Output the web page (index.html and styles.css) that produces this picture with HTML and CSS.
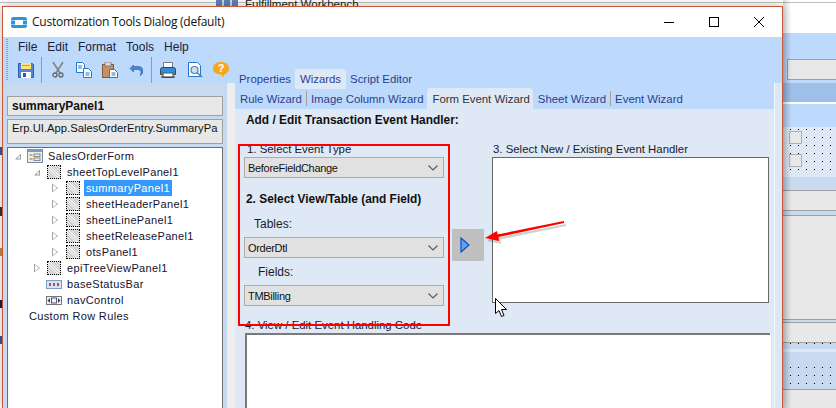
FILE: index.html
```html
<!DOCTYPE html>
<html lang="en">
<head>
<meta charset="utf-8">
<title>Customization Tools Dialog</title>
<link rel="stylesheet" href="styles.css">
</head>
<body>
<div class="desktop">
  <div class="back-window">
    <div class="back-title"><span class="back-icon"></span><span>Fulfillment Workbench</span></div>
    <div class="back-left"></div>
    <div class="back-strip">
      <div class="b-white"></div>
      <div class="b-blue"><div class="b-input"></div></div>
      <div class="b-dark"></div>
      <div class="b-gap"></div>
      <div class="b-blue2"></div>
      <div class="b-dots"><i></i><i></i></div>
      <div class="b-mid"></div>
      <div class="b-grey1"></div>
      <div class="b-line1"></div>
      <div class="b-grey2"></div>
      <div class="b-line2"></div>
      <div class="b-grey3"></div>
      <div class="b-dots2"></div>
      <div class="b-grey4"></div>
    </div>
  </div>

  <div class="window">
    <header class="titlebar">
      <svg class="app-icon" width="16" height="11" viewBox="0 0 16 11"><rect x="0" y="0" width="16" height="11" rx="2.5" fill="#2f93d6"/><rect x="0" y="3" width="16" height="1" fill="#8fcdf0"/><rect x="0" y="7" width="16" height="1" fill="#8fcdf0"/><rect x="4" y="3" width="8" height="5" fill="#fff"/></svg>
      <span class="title-text">Customization Tools Dialog (default)</span>
      <div class="controls">
        <svg width="10" height="10" viewBox="0 0 10 10"><path d="M0 5.5H10" stroke="#000" fill="none"/></svg>
        <svg width="10" height="10" viewBox="0 0 10 10"><rect x=".5" y=".5" width="9" height="9" stroke="#000" fill="none"/></svg>
        <svg width="10" height="10" viewBox="0 0 10 10"><path d="M0 0L10 10M10 0L0 10" stroke="#000" fill="none"/></svg>
      </div>
    </header>

    <div class="chrome">
      <div class="grip"></div>
      <nav class="menubar"><span>File</span><span>Edit</span><span>Format</span><span>Tools</span><span>Help</span></nav>
      <div class="toolbar">
        <svg class="t-save" width="16" height="16" viewBox="0 0 16 16"><path d="M.5 1.5h14l1 1v13H.5z" fill="#4f86d8" stroke="#2f5da8"/><rect x="3" y="1" width="10" height="6" fill="#ffe27a"/><rect x="4" y="3" width="8" height="1" fill="#d29a2c"/><rect x="3" y="10" width="10" height="6" fill="#fff"/><rect x="5" y="11" width="3" height="4" fill="#2f5da8"/></svg>
        <span class="sep s1"></span>
        <svg class="t-cut" width="12" height="16" viewBox="0 0 12 16"><path d="M1 0L8 11M11 0L4 11" stroke="#7d7d7d" stroke-width="1.5" fill="none"/><circle cx="3" cy="13" r="2" fill="none" stroke="#666" stroke-width="1.3"/><circle cx="9" cy="13" r="2" fill="none" stroke="#666" stroke-width="1.3"/></svg>
        <svg class="t-copy" width="16" height="16" viewBox="0 0 16 16"><path d="M.5.5h6l2 2v8H.5z" fill="#fff" stroke="#1e78d0"/><path d="M7.5 6.5h5l3 3v6h-8z" fill="#fff" stroke="#1e78d0"/><path d="M2 4h4M2 6h4M9.500 11h4M9.500 13h4" stroke="#1e78d0"/></svg>
        <svg class="t-paste" width="16" height="16" viewBox="0 0 16 16"><rect x=".5" y="2.500" width="11" height="13" fill="#c58f68" stroke="#8a5a38"/><rect x="3" y="0" width="6" height="4" fill="#ddd" stroke="#777" stroke-width=".8"/><path d="M7.500 7.500h5l3 3v5h-8z" fill="#fff" stroke="#1e78d0"/><path d="M9.500 11h4M9.500 13h4" stroke="#1e78d0"/></svg>
        <svg class="t-undo" width="14" height="12" viewBox="0 0 14 12"><path d="M4.500 1L1 4.500 4.500 8V5.500H9c2 0 3 1 3 3 0 1-.4 2-1 3 2-1 3-2.500 3-4.500 0-3-2-4.500-5-4.500H4.500z" fill="#4d82d6" stroke="#2d5cab" stroke-width=".6"/></svg>
        <span class="sep s2"></span>
        <svg class="t-print" width="16" height="16" viewBox="0 0 16 16"><path d="M3.500.5h9v6h-9z" fill="#fff" stroke="#777"/><path d="M.5 7.500q0-2 2-2h11q2 0 2 2v5h-15z" fill="#2e8fe0" stroke="#444"/><rect x="3" y="11" width="10" height="4.500" fill="#fff" stroke="#555"/><rect x="1" y="14.500" width="14" height="1" fill="#333"/></svg>
        <svg class="t-prev" width="15" height="16" viewBox="0 0 15 16"><path d="M.5.5h9l3 3v11H.5z" fill="#fff" stroke="#1e78d0"/><circle cx="6.500" cy="8" r="3.500" fill="#c9e2f7" stroke="#5a7d9e" stroke-width="1.200"/><path d="M9 10.500L14 15" stroke="#5a7d9e" stroke-width="1.600"/></svg>
        <svg class="t-help" width="16" height="16" viewBox="0 0 16 16"><path d="M8 0c5 0 8 2.500 8 6.500 0 3-2 5-4 5.500L9 15.500V12.500C4 12.500 0 10.500 0 6.500 0 2.500 3 0 8 0z" fill="#f5a81c"/><text x="8" y="10" class="q">?</text></svg>
      </div>

      <div class="workspace">
        <aside class="left-panel">
          <div class="panel-name">summaryPanel1</div>
          <div class="panel-class">Erp.UI.App.SalesOrderEntry.SummaryPa</div>
          <div class="tree">
            <div class="row d0"><i class="tw open"></i><svg class="node" width="16" height="14" viewBox="0 0 16 14"><rect x=".5" y=".5" width="15" height="13" fill="#f2ecd8" stroke="#6f8fb5"/><rect x=".5" y=".5" width="15" height="2.500" fill="#6f9fd8"/><rect x="7" y="5" width="6" height="2.500" fill="none" stroke="#777" stroke-width=".8"/><rect x="7" y="9" width="6" height="2.500" fill="none" stroke="#777" stroke-width=".8"/><path d="M2.500 6h3M2.500 10h3" stroke="#777"/></svg><span>SalesOrderForm</span></div>
            <div class="row d1"><i class="tw open"></i><b class="dot"></b><span>sheetTopLevelPanel1</span></div>
            <div class="row d2"><i class="tw"></i><b class="dot"></b><span class="sel">summaryPanel1</span></div>
            <div class="row d2"><i class="tw"></i><b class="dot"></b><span>sheetHeaderPanel1</span></div>
            <div class="row d2"><i class="tw"></i><b class="dot"></b><span>sheetLinePanel1</span></div>
            <div class="row d2"><i class="tw"></i><b class="dot"></b><span>sheetReleasePanel1</span></div>
            <div class="row d2"><i class="tw"></i><b class="dot"></b><span>otsPanel1</span></div>
            <div class="row d1"><i class="tw"></i><b class="dot"></b><span>epiTreeViewPanel1</span></div>
            <div class="row d1"><i class="tw none"></i><svg class="mini" width="16" height="9" viewBox="0 0 16 9"><rect x=".5" y=".5" width="15" height="8" fill="#d4e3f5" stroke="#7f9dc0"/><path d="M3 3h2v3H3zM7 3h2v3H7zM11 3h2v3h-2z" fill="#c04a4a"/></svg><span>baseStatusBar</span></div>
            <div class="row d1"><i class="tw none"></i><svg class="mini" width="16" height="9" viewBox="0 0 16 9"><rect x=".5" y=".5" width="15" height="8" fill="#f2f2f2" stroke="#777"/><path d="M4 2L1.500 4.500 4 7zM12 2l2.500 2.500L12 7z" fill="#446"/><rect x="5.500" y="2" width="5" height="5" fill="none" stroke="#557"/></svg><span>navControl</span></div>
            <div class="row custom"><span>Custom Row Rules</span></div>
          </div>
        </aside>
        <div class="divider"></div>
        <main class="right-panel">
          <div class="tabs">
            <span class="tab">Properties</span><span class="tab active">Wizards</span><span class="tab">Script Editor</span>
          </div>
          <div class="subtabs">
            <span class="sub">Rule Wizard</span><i class="bar"></i><span class="sub">Image Column Wizard</span><span class="sub active">Form Event Wizard</span><span class="sub">Sheet Wizard</span><i class="bar"></i><span class="sub">Event Wizard</span>
          </div>
          <section class="content">
            <h1 class="heading">Add / Edit Transaction Event Handler:</h1>
            <div class="columns">
              <div class="col-left">
                <label class="lab first">1. Select Event Type</label>
                <div class="combo"><span>BeforeFieldChange</span><svg width="10" height="6" viewBox="0 0 10 6"><path d="M.5.5L5 5 9.500.5" fill="none" stroke="#555" stroke-width="1.100"/></svg></div>
                <h2 class="heading two">2. Select View/Table (and Field)</h2>
                <label class="lab tables">Tables:</label>
                <div class="combo"><span>OrderDtl</span><svg width="10" height="6" viewBox="0 0 10 6"><path d="M.5.5L5 5 9.500.5" fill="none" stroke="#555" stroke-width="1.100"/></svg></div>
                <label class="lab fields">Fields:</label>
                <div class="combo"><span>TMBilling</span><svg width="10" height="6" viewBox="0 0 10 6"><path d="M.5.5L5 5 9.500.5" fill="none" stroke="#555" stroke-width="1.100"/></svg></div>
              </div>
              <div class="go"><svg width="10" height="16" viewBox="0 0 10 16"><path d="M1 1L9 8 1 15z" fill="#5ba4f0" stroke="#0c4fc0" stroke-width="1.200"/></svg></div>
              <div class="col-right">
                <label class="lab">3. Select New / Existing Event Handler</label>
                <div class="handler-list"></div>
              </div>
            </div>
            <label class="lab code-label">4. View / Edit Event Handling Code</label>
            <div class="code-box"></div>
          </section>
        </main>
        <div class="edge"></div>
      </div>
    </div>
  </div>

  <div class="red-box"></div>
  <svg class="arrow" width="90" height="34" viewBox="0 0 90 34">
    <path d="M1 24L13 17 13.500 20 80 7 80 9 14.500 22.500 15 27z" fill="#000" opacity=".18" transform="translate(2 2)"/>
    <path d="M1 23L13 16 13.500 19.500 80 6 80 8 14.500 22 15 26z" fill="#f00"/>
  </svg>
  <svg class="cursor" width="13" height="19" viewBox="0 0 13 19"><path d="M.5.5V15.500L4 12.500 6.500 18.500 9 17.500 6.500 11.500H11.500z" fill="#fff" stroke="#000"/></svg>
</div>
</body>
</html>
```
FILE: styles.css
```css
* { box-sizing: border-box; }
html, body { margin: 0; padding: 0; }
body { width: 836px; height: 408px; overflow: hidden; font-family: "Liberation Sans", Arial, sans-serif; background: #fff; }
.desktop { position: relative; width: 836px; height: 408px; overflow: hidden; background: #fff; }

/* window behind */
.back-window { position: absolute; inset: 0; }
.back-title { height: 7px; overflow: hidden; display: flex; padding-left: 216px; gap: 7px; font-size: 11.5px; line-height: 9px; color: #222; background: linear-gradient(#fff 2px, #c0c0c0 2px, #c0c0c0 3px, #fff 3px); }
.back-icon { width: 22px; height: 7px; background: repeating-linear-gradient(90deg, #5f7fb8 0 6px, #c8d4e8 6px 8px); }
.back-left { position: absolute; left: 0; top: 7px; width: 2px; height: 401px; background: linear-gradient(#fff 0 35%, #2a5fa8 35% 37%, #fff 37% 50%, #333 50% 52%, #fff 52% 60%, #c98a3a 60% 62%, #fff 62% 73%, #1a1a4a 73% 75%, #fff 75% 82%, #2a5fa8 82% 84%, #fff 84%); }
.back-strip { position: absolute; left: 783px; top: 0; width: 53px; height: 408px; display: flex; flex-direction: column; }
.back-strip::after { content: ""; position: absolute; left: 0; top: 0; width: 8px; height: 100%; background: linear-gradient(90deg, rgba(0,0,0,.14), transparent); }
.back-strip > div { flex: none; }
.b-white { height: 33px; background: linear-gradient(#fff 2px, #c0c0c0 2px, #c0c0c0 3px, #fff 3px); }
.b-blue { height: 50px; background: #bdd9fc; padding: 26px 0 0 4px; }
.b-input { height: 21px; background: #e8e8e8; border: 1px solid #a0a0a0; border-right: 0; }
.b-dark { height: 19px; background: #9dbfe8; }
.b-gap { height: 2px; background: #fff; }
.b-blue2 { height: 23px; background: #bdd9fc; }
.b-dots { height: 50px; background-color: #dfe8f5; background-image: radial-gradient(circle at .5px .5px, #000 .7px, transparent .7px); background-size: 8px 8px; background-position: 15px 2px; padding: 4px 0 0 6px; display: flex; flex-direction: column; gap: 10px; }
.b-dots i { display: block; width: 13px; height: 13px; background: #e8e8e8; border: 1px solid #b0b0b0; }
.b-mid { height: 14px; background: #c8daf0; border-bottom: 1px solid #a0a0a0; }
.b-grey1 { height: 19px; background: #e8e8e8; }
.b-line1 { height: 6px; background: #c8daf0; border: solid #a0a0a0; border-width: 1px 0; }
.b-grey2 { height: 103px; background: #e8e8e8; }
.b-line2 { height: 4px; background: #c8daf0; border: solid #a0a0a0; border-width: 1px 0; }
.b-grey3 { height: 19px; background: #e8e8e8; }
.b-dots2 { height: 48px; border-top: 1px solid #a0a0a0; border-bottom: 1px solid #a0a0a0; background:
  linear-gradient(#dfe8f5, #dfe8f5) 0 6px / 100% 3px no-repeat,
  linear-gradient(#c8daf0, #c8daf0) 0 2px / 100% 22px no-repeat,
  radial-gradient(circle at .5px .5px, #000 .7px, transparent .7px) 7px 0 / 8px 8px,
  #c8daf0; }
.b-grey4 { height: 18px; background: #e8e8e8; }

/* dialog */
.window { position: absolute; left: 2px; top: 6px; width: 781px; height: 402px; border: 1px solid #c8583a; border-bottom: 0; display: flex; flex-direction: column; background: #fff; box-shadow: 0 0 9px rgba(0,0,0,.28); }
.titlebar { flex: none; height: 30px; display: flex; align-items: center; padding-left: 8px; background: #fff; }
.app-icon { margin-right: 5px; }
.title-text { font: 12px/16px "Open Sans", sans-serif; letter-spacing: -.25px; color: #111; }
.controls { margin-left: auto; display: flex; gap: 35px; padding-right: 18px; }
.chrome { flex: 1; min-height: 0; position: relative; background: #bdd9fc; display: flex; flex-direction: column; }
.grip { position: absolute; left: 3px; top: 2px; width: 2px; height: 42px; background: repeating-linear-gradient(#8aa0c0 0 1px, transparent 1px 2px); }
.menubar { flex: none; height: 20px; display: flex; align-items: center; padding-left: 15px; font-size: 12px; color: #16223c; gap: 10px; }
.toolbar { flex: none; height: 26px; display: flex; align-items: center; padding-left: 15px; }
.sep { width: 1px; height: 26px; background: #8f9bab; }
.s1 { margin: 0 10px 0 7px; }
.t-cut { margin-right: 12px; }
.t-copy { margin-right: 10px; }
.t-paste { margin-right: 11px; }
.t-undo { margin-right: 8px; }
.s2 { margin-right: 8px; }
.t-print { margin-right: 12px; }
.t-prev { margin-right: 10px; }
.q { font: bold 11px "Liberation Sans", sans-serif; fill: #fff; text-anchor: middle; }

.workspace { flex: 1; min-height: 0; display: flex; }
.left-panel { flex: none; width: 224px; padding: 13px 4px 0; background: #c8daf0; border-radius: 5px 5px 0 0; display: flex; flex-direction: column; gap: 3px; }
.panel-name { flex: none; height: 20px; background: #e8e8e8; border: 1px solid #a0a0a0; font: bold 12px/18px "Liberation Sans", sans-serif; padding-left: 4px; color: #111; }
.panel-class { flex: none; height: 25px; background: #e8e8e8; border: 1px solid #a0a0a0; font-size: 11.25px; line-height: 17px; padding-left: 4px; color: #111; overflow: hidden; white-space: nowrap; }
.tree { flex: 1; background: #fff; border: 1px solid #6e6e6e; border-bottom: 0; font-size: 11px; color: #12122e; letter-spacing: .35px; }
.row { height: 16px; display: flex; align-items: center; white-space: nowrap; }
.d0 { padding-left: 7px; }
.d1 { padding-left: 26px; }
.d2 { padding-left: 44px; }
.custom { padding-left: 21px; }
.tw { flex: none; width: 6px; height: 9px; margin-right: 7px; position: relative; }
.tw::before { content: ""; position: absolute; left: 0; top: 0; width: 6px; height: 9px; background: #9a9a9a; clip-path: polygon(0 0, 100% 50%, 0 100%, 0 0, 15% 15%, 15% 85%, 82% 50%, 15% 15%); }
.tw.open::before { height: 6px; top: 2px; clip-path: polygon(100% 0, 100% 100%, 0 100%, 100% 0, 85% 35%, 35% 85%, 85% 85%, 85% 35%); }
.d0 .tw { margin-right: 6px; }
.d2 .tw { margin-right: 8px; }
.tw.none { margin-right: 6px; }
.tw.none::before { display: none; }
.node { margin-right: 5px; flex: none; }
.dot { flex: none; width: 14px; height: 14px; margin-right: 6px; background: #ddd; border: 1px dotted #000; background-image: repeating-linear-gradient(45deg, #ccc 0 1px, #eee 1px 2px); }
.d2 .dot { margin-right: 4px; }
.d2 span { padding: 0 2px; height: 16px; line-height: 16px; }
.sel { background: #3399ff; color: #fff; }
.mini { flex: none; margin-right: 5px; }

.divider { flex: none; width: 8px; background: #eeeeee; }
.right-panel { flex: 1; min-width: 0; margin-top: -14px; display: flex; flex-direction: column; }
.tabs { flex: none; height: 19px; display: flex; align-items: flex-start; font-size: 11.4px; color: #2b3f8f; }
.tab { height: 20px; line-height: 20px; padding: 0 4px; }
.tab.active { background: #dfe8f5; border-radius: 3px 3px 0 0; padding: 0 5px; }
.subtabs { flex: none; height: 21px; display: flex; align-items: center; font-size: 11.38px; color: #2b3f8f; padding-left: 1px; }
.sub { height: 21px; line-height: 22px; padding: 0 4px; }
.sub.active { background: #dfe8f5; color: #333; border-radius: 3px 3px 0 0; padding: 0 3px 0 5px; margin-right: 1px; }
.bar { width: 1px; height: 15px; background: #a89f8f; }
.content { flex: 1; min-height: 0; background: #dfe8f5; padding: 4px 0 0 10px; overflow: hidden; }
.heading { margin: 0; font: bold 11.9px/14px "Liberation Sans", sans-serif; color: #111; }
.content > .heading { padding-left: 1px; }
.columns { display: flex; margin-top: 16px; }
.col-left { flex: none; width: 200px; margin-left: -1px; display: flex; flex-direction: column; }
.lab { display: block; font-size: 11.4px; line-height: 13px; color: #1a1a2e; white-space: nowrap; }
.first { padding-left: 3px; margin-bottom: 1px; }
.combo { height: 21px; flex: none; background: #e1e1e1; border: 1px solid #adadad; display: flex; align-items: center; justify-content: space-between; padding: 0 5px 0 3px; font-size: 11px; letter-spacing: -.3px; color: #111; }
.two { margin-top: 14px; padding-left: 2px; }
.tables { padding-left: 10px; margin-top: 12px; margin-bottom: 6px; font-size: 12px; }
.fields { padding-left: 14px; margin-top: 8px; margin-bottom: 6px; font-size: 12px; }
.go { flex: none; width: 32px; height: 32px; margin: 86px 8px 0 8px; background: #c0c0c0; display: flex; align-items: center; padding-left: 8px; }
.col-right { flex: 1; margin-right: 5px; min-width: 0; }
.col-right .lab { margin-bottom: 1px; padding-left: 1px; }
.handler-list { height: 146px; background: #fff; border: 1px solid #696969; }
.code-label { margin-top: 13px; height: 14px; }
.code-box { height: 90px; margin-right: 4px; background: #fff; border: solid #7a7a7a; border-width: 2px 0 0 2px; box-shadow: 1px 0 0 #fff; }
.edge { flex: none; width: 8px; background: #dce8f6; border-left: 1px solid #f4f8fc; }

.red-box { position: absolute; left: 238px; top: 144px; width: 212px; height: 182px; border: 2px solid #f00; }
.arrow { position: absolute; left: 484px; top: 215px; }
.cursor { position: absolute; left: 495px; top: 298px; }
```
